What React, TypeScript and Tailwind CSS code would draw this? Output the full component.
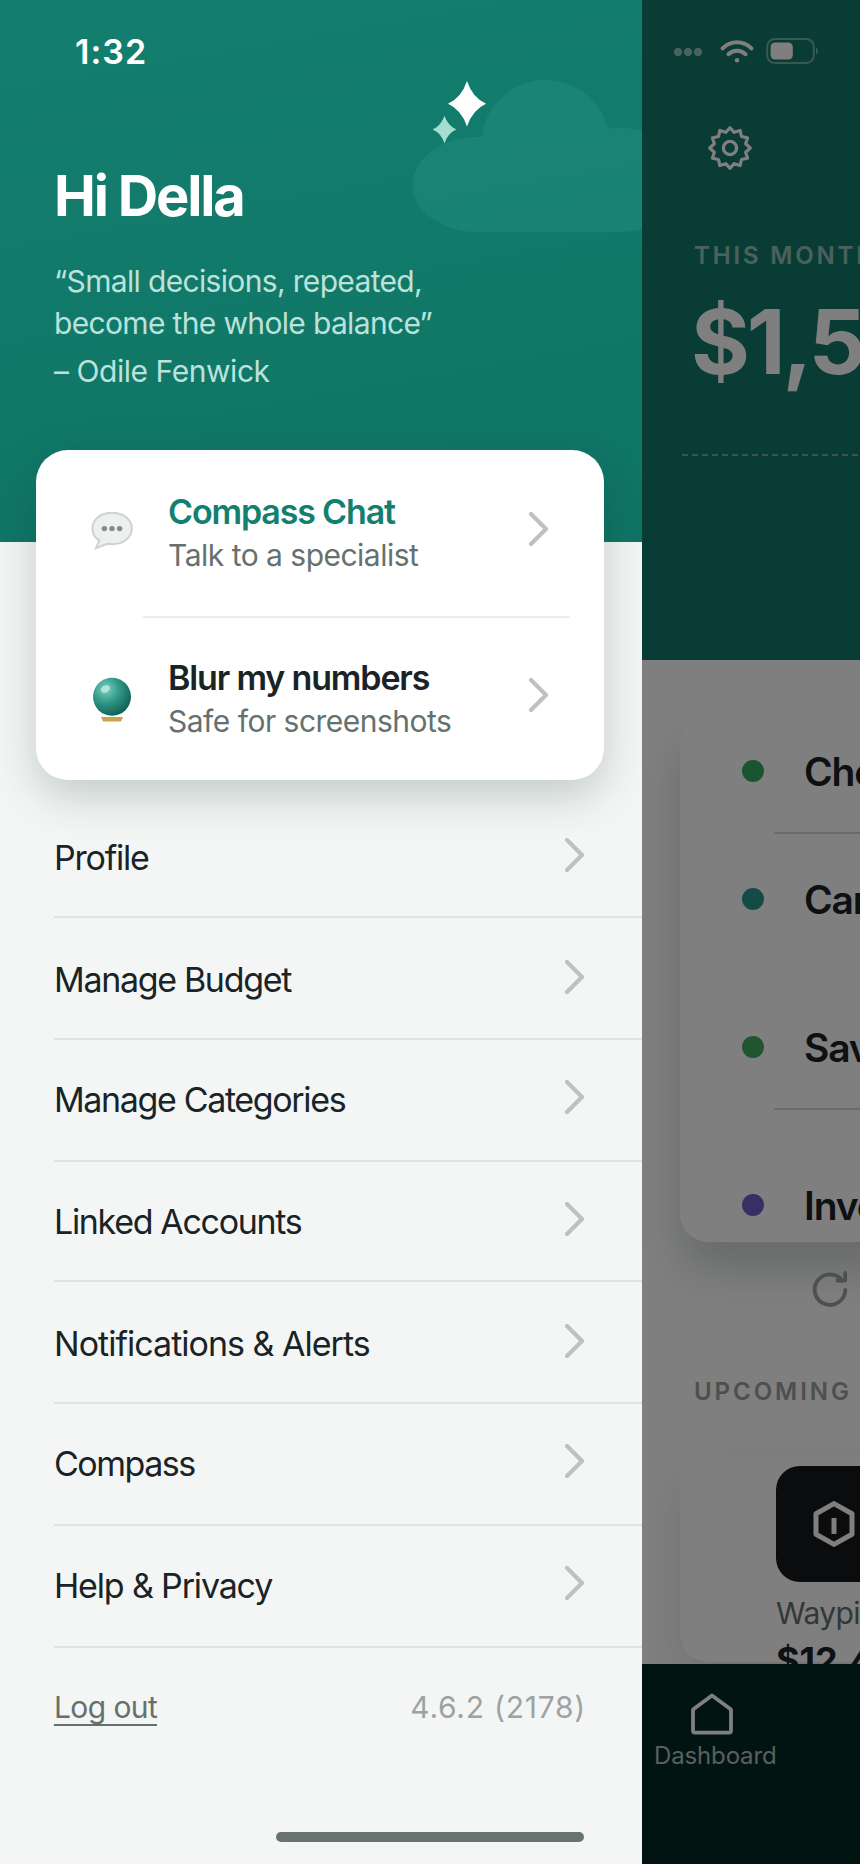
import React from 'react';

const menuItems = [
  { label: 'Profile', row: 'h-[138px] pt-[58px]', track: 'tracking-[-0.036em]' },
  { label: 'Manage Budget', row: 'h-[122px] pt-[42px]', track: 'tracking-[-0.039em]' },
  { label: 'Manage Categories', row: 'h-[122px] pt-[40px]', track: 'tracking-[-0.04em]' },
  { label: 'Linked Accounts', row: 'h-[120px] pt-[40px]', track: 'tracking-[-0.039em]' },
  { label: 'Notifications & Alerts', row: 'h-[122px] pt-[42px]', track: 'tracking-[-0.029em]' },
  { label: 'Compass', row: 'h-[122px] pt-[40px]', track: 'tracking-[-0.044em]' },
  { label: 'Help & Privacy', row: 'h-[122px] pt-[40px]', track: 'tracking-[-0.034em]' },
];

const Chevron = ({ className = '' }: { className?: string }) => (
  <svg width="20" height="34" viewBox="0 0 20 34" fill="none" className={`shrink-0 ${className}`}>
    <path d="M2 2L17 17L2 32" stroke="#bcc2c0" strokeWidth="4.2" strokeLinecap="round" strokeLinejoin="round" />
  </svg>
);

const ChatIcon = () => (
  <svg width="44" height="50" viewBox="0 0 44 50" fill="none">
    <path
      d="M22 4.8C33.2 4.8 41.8 11.4 41.8 20.4C41.8 29.6 33.2 36.2 22 36.2C20.4 36.2 18.8 36 17.4 35.8L6 40.2L9.4 32.4C4.8 29.6 2.4 25.6 2.4 20.4C2.4 11.4 10.8 4.8 22 4.8Z"
      fill="#edf0ef"
      stroke="#cfd2d1"
      strokeWidth="2"
    />
    <circle cx="14.4" cy="20.6" r="2.7" fill="#848a88" />
    <circle cx="22" cy="20.6" r="2.7" fill="#848a88" />
    <circle cx="29.6" cy="20.6" r="2.7" fill="#848a88" />
  </svg>
);

const CrystalBallIcon = () => (
  <svg width="44" height="50" viewBox="0 0 44 50" fill="none">
    <defs>
      <radialGradient id="ball" cx="0.34" cy="0.3" r="0.75">
        <stop offset="0" stopColor="#7fd0c2" />
        <stop offset="0.45" stopColor="#349b8a" />
        <stop offset="1" stopColor="#0c5f51" />
      </radialGradient>
    </defs>
    <path d="M11 43H33L31 47.5H13Z" fill="#c9a24e" />
    <circle cx="22" cy="22.8" r="19" fill="url(#ball)" />
    <ellipse cx="15.4" cy="15" rx="4.8" ry="3.6" transform="rotate(-25 15.4 15)" fill="#c3ebe3" fillOpacity="0.8" />
  </svg>
);

const HeaderArt = () => (
  <svg width="642" height="542" viewBox="0 0 642 542" fill="none" className="absolute inset-0">
    <g fill="#82faeb" opacity="0.07">
      <ellipse cx="478" cy="184.5" rx="65.5" ry="47.5" />
      <circle cx="545.5" cy="144" r="64" />
      <ellipse cx="620" cy="180" rx="72" ry="52" />
      <rect x="478" y="150" width="142" height="82" />
    </g>
    <path d="M467 81Q472.500 97.700 486 103.700Q472.500 109.700 467 126.400Q461.500 109.700 448 103.700Q461.500 97.700 467 81Z" fill="#fff" />
    <path d="M444.500 115.800Q447.900 125.900 456.300 129.600Q447.900 133.300 444.500 143.400Q441.100 133.300 432.700 129.600Q441.100 125.900 444.500 115.800Z" fill="#a6ddd3" />
  </svg>
);

const FeatureRow = ({ icon, title, text, accent, className }: { icon: React.ReactNode; title: string; text: string; accent?: boolean; className: string }) => (
  <div className={`flex items-start pl-[54px] pr-[55px] ${className}`}>
    <div className="mt-4 shrink-0">{icon}</div>
    <div className="ml-[34px] flex-1">
      <div className={`text-[34px] leading-[40px] font-semibold tracking-[-0.034em] ${accent ? 'text-[#147f6e]' : 'text-[#1a2326]'}`}>{title}</div>
      <div className="mt-[3px] text-[30px] leading-[40px] tracking-[-0.017em] text-[#66716e]">{text}</div>
    </div>
    <Chevron className="mt-5" />
  </div>
);

const Drawer = () => (
  <aside className="flex h-full w-[642px] shrink-0 flex-col bg-[#f4f6f5]">
    <header className="relative h-[542px] shrink-0 bg-linear-170 from-[#147f6f] to-[#0f7464] pl-[54px] pt-8">
      <HeaderArt />
      <div className="relative">
        <div className="ml-[21px] text-[34px] leading-[40px] font-semibold tracking-[0.03em] text-white">1:32</div>
        <h1 className="mt-[92px] text-[56px] leading-[64px] font-bold tracking-[-0.039em] text-white">Hi Della</h1>
        <p className="mt-8 text-[30px] leading-[42px] tracking-[-0.022em] text-[#bce2db]">
          “Small decisions, repeated,
          <br />
          become the whole balance”
        </p>
        <p className="mt-1.5 text-[30px] leading-[42px] tracking-[-0.015em] text-[#bce2db]">– Odile Fenwick</p>
      </div>
    </header>

    <section className="relative ml-[36px] mr-[38px] -mt-[92px] h-[330px] shrink-0 rounded-[32px] bg-white shadow-[0_16px_44px_rgba(20,50,45,0.22)]">
      <FeatureRow icon={<ChatIcon />} title="Compass Chat" text="Talk to a specialist" accent className="h-[166px] pt-[42px]" />
      <div className="ml-[107px] mr-[34px] h-0.5 bg-[#eceeed]"></div>
      <FeatureRow icon={<CrystalBallIcon />} title="Blur my numbers" text="Safe for screenshots" className="h-[162px] pt-[40px]" />
    </section>

    <nav className="relative pl-[54px]">
      {menuItems.map((item) => (
        <div key={item.label} className={`flex items-start justify-between border-b-2 border-[#dfe3e2] pr-[57px] ${item.row}`}>
          <span className={`text-[34px] leading-[40px] text-[#1a2326] ${item.track}`}>{item.label}</span>
          <Chevron />
        </div>
      ))}
    </nav>

    <footer className="mt-[42px] flex items-start justify-between pl-[54px] pr-[56px] text-[30px] leading-[34px]">
      <a className="border-b-2 border-[#66716e] tracking-[-0.02em] text-[#66716e]">Log out</a>
      <span className="tracking-[0.025em] text-[#9ca3a1]">4.6.2 (2178)</span>
    </footer>
    <div className="mt-[106px] ml-auto mr-[58px] h-2.5 w-[308px] rounded-full bg-[#68736f]"></div>
  </aside>
);

const gearPoints = Array.from({ length: 24 }, (_, i) => {
  const r = i % 2 === 0 ? 20.3 : 16.2;
  const a = (i * Math.PI) / 12;
  return `${(24 + r * Math.sin(a)).toFixed(2)},${(24 - r * Math.cos(a)).toFixed(2)}`;
}).join(' ');

const StatusIcons = () => (
  <div className="flex h-[102px] items-center pl-8">
    <svg width="28" height="10" viewBox="0 0 28 10" className="mt-0.5 shrink-0" fill="#fff" fillOpacity="0.55">
      <circle cx="4" cy="5" r="4.200" />
      <circle cx="14" cy="5" r="4.200" />
      <circle cx="24" cy="5" r="4.200" />
    </svg>
    <svg width="34" height="24" viewBox="0 0 34 24" fill="none" stroke="#fff" strokeWidth="4" strokeLinecap="round" className="ml-[18px] shrink-0">
      <path d="M2.600 9.400C10.600 1.200 23.400 1.200 31.400 9.400" />
      <path d="M8.400 15.200C13.200 10.600 20.800 10.600 25.600 15.200" />
      <circle cx="17" cy="21.200" r="2.200" fill="#fff" stroke="none" />
    </svg>
    <svg width="54" height="28" viewBox="0 0 54 28" fill="none" className="ml-3 shrink-0">
      <rect x="1.200" y="2" width="46.600" height="24" rx="7.500" stroke="#fff" strokeOpacity="0.42" strokeWidth="2" />
      <rect x="4.600" y="5.400" width="22.200" height="17.200" rx="4.500" fill="#fff" />
      <path d="M50 10.500C52.600 11.600 52.600 16.400 50 17.500Z" fill="#fff" fillOpacity="0.45" />
    </svg>
  </div>
);

const AccountRow = ({ name, color, className = '' }: { name: string; color: string; className?: string }) => (
  <div className={`flex h-12 items-center gap-10 pl-[62px] ${className}`}>
    <span className={`-mt-0.5 size-[22px] shrink-0 rounded-full ${color}`}></span>
    <span className="text-[39px] leading-[48px] font-semibold tracking-[-0.03em] text-[#1a2326]">{name}</span>
  </div>
);

const Dashboard = () => (
  <main className="relative flex h-full w-[218px] shrink-0 flex-col overflow-hidden bg-white">
    <div className="h-[1664px] shrink-0 overflow-hidden">
      <div className="h-[660px] bg-[#127868]">
        <StatusIcons />
        <svg width="48" height="48" viewBox="0 0 48 48" fill="none" stroke="#fff" className="ml-16 mt-[22px]">
          <polygon points={gearPoints} strokeWidth="3.200" strokeLinejoin="round" />
          <circle cx="24" cy="24" r="6.600" strokeWidth="3.400" />
        </svg>
        <div className="mt-[68px] ml-[52px] text-[24px] leading-[32px] font-semibold tracking-[0.118em] whitespace-nowrap text-white/55">THIS MONTH</div>
        <div className="mt-[22px] ml-[49px] text-[90px] leading-[96px] font-bold tracking-[-0.035em] text-white">$1,524</div>
        <div className="mt-16 ml-10 h-0.5 bg-[repeating-linear-gradient(90deg,rgba(255,255,255,0.38)_0_6px,transparent_6px_10px)]"></div>
      </div>

      <section className="mt-14 ml-[38px] h-[526px] w-[560px] rounded-[28px] bg-white pt-8 shadow-[0_28px_44px_rgba(20,50,45,0.2)]">
        <AccountRow name="Checking" color="bg-[#34a860]" />
        <div className="mt-9 ml-[94px] h-0.5 bg-[#d3d8d7]"></div>
        <AccountRow name="Cards" color="bg-[#28968f]" className="mt-[42px]" />
        <AccountRow name="Savings" color="bg-[#42aa5a]" className="mt-[100px]" />
        <div className="mt-9 ml-[94px] h-0.5 bg-[#d3d8d7]"></div>
        <AccountRow name="Investments" color="bg-[#745ccc]" className="mt-[72px]" />
      </section>

      <svg width="40" height="40" viewBox="0 0 40 40" fill="none" stroke="#9aa09e" strokeWidth="3.800" strokeLinecap="round" strokeLinejoin="round" className="mt-7 ml-[168px]">
        <path d="M35.300 20A15.300 15.300 0 1 1 32.500 10.800" />
        <path d="M35.200 3V10.500H27.500" />
      </svg>
      <div className="mt-[66px] ml-[52px] text-[24px] leading-[32px] font-semibold tracking-[0.123em] whitespace-nowrap text-[#9aa09e]">UPCOMING</div>

      <section className="mt-12 ml-[38px] h-[206px] w-[560px] rounded-[28px] bg-white pl-24 pt-2.5 shadow-[0_20px_44px_rgba(20,50,45,0.12)]">
        <div className="flex size-[116px] items-center justify-center rounded-[24px] bg-[#16181a]">
          <svg width="44" height="50" viewBox="0 0 44 50" fill="none" stroke="#fff" strokeWidth="5">
            <path d="M22 4.600L40 14.700V35.300L22 45.400L4 35.300V14.700Z" strokeLinejoin="round" />
            <path d="M22 19V35" />
          </svg>
        </div>
        <div className="mt-[11px] text-[30px] leading-[40px] tracking-[-0.02em] whitespace-nowrap text-[#66716e]">Waypine</div>
        <div className="mt-[7px] text-[36px] leading-[40px] font-bold whitespace-nowrap text-[#1a2326]">$12.49</div>
      </section>
    </div>

    <nav className="h-[200px] shrink-0 bg-[#042824] pt-7">
      <svg width="48" height="44" viewBox="0 0 48 44" fill="none" stroke="#fff" strokeWidth="3.800" strokeLinejoin="round" className="ml-[46px]">
        <path d="M24 3.500L43 17.500V38.500Q43 40.700 40.800 40.700H7.200Q5 40.700 5 38.500V17.500Z" />
      </svg>
      <div className="mt-[5px] ml-3 text-[24px] leading-[30px] tracking-[-0.006em] text-[#b3bfbc]">Dashboard</div>
    </nav>

    {/* dims the screen while the drawer is open */}
    <div className="absolute inset-0 bg-black/50"></div>
  </main>
);

export default function App() {
  return (
    <div className="flex h-[1864px] w-[860px] overflow-hidden font-['Inter','Noto_Sans',sans-serif]">
      <Drawer />
      <Dashboard />
    </div>
  );
}
